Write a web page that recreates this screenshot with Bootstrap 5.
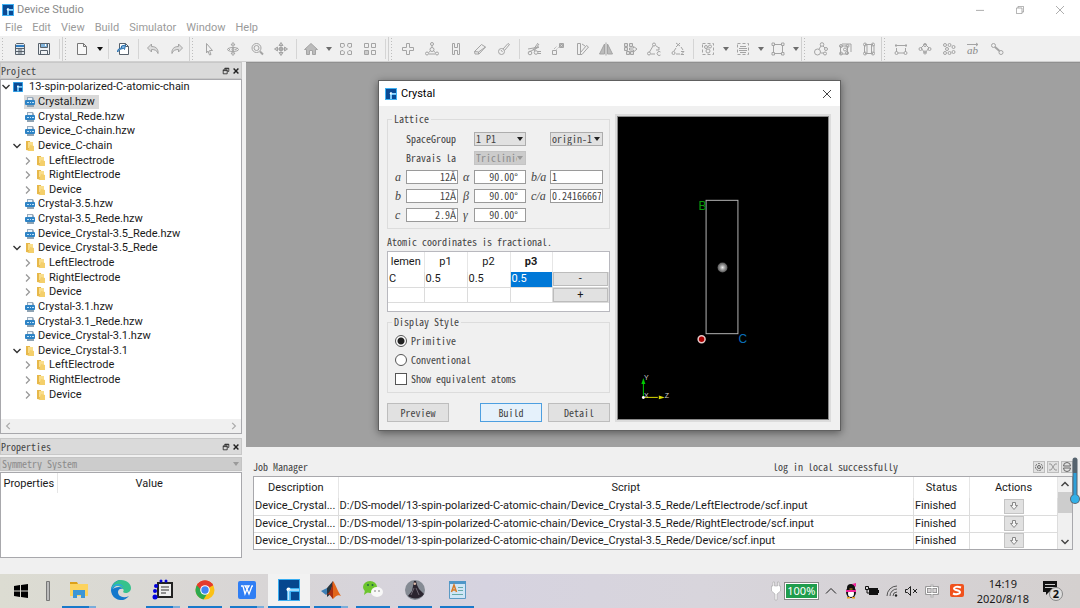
<!DOCTYPE html>
<html lang="en">
<head>
<meta charset="utf-8">
<meta name="viewport" content="width=device-width, initial-scale=1">
<title>Device Studio</title>
<link href="https://cdn.jsdelivr.net/npm/bootstrap@5.3.0/dist/css/bootstrap.min.css" rel="stylesheet">
<style>
  :root { --face:#f0f0f0; --line:#a8a8ac; --hair:#dcdcdc; --ui:Roboto,"Open Sans",sans-serif; --mono:"Noto Sans CJK SC","Liberation Mono",monospace; }
  body { font-family:var(--ui); font-size:11px; line-height:15px; color:#1a1a1a; background:var(--face); min-height:100vh; overflow:hidden; }
  button, input, select { font:inherit; font-feature-settings:inherit; color:inherit; border-radius:0; }
  button { padding:0; border:0; background:none; }
  svg { display:block; flex:none; }
  .mono { font-family:var(--mono); font-feature-settings:"hwid"; font-size:10px; line-height:12px; color:#444; }
  .s16 { width:16px; height:16px; }
  .s12 { width:12px; height:12px; }
  .s10 { width:10px; height:10px; }
  .s8 { width:8px; height:8px; }

  /* title bar, menu, toolbars */
  .titlebar { height:19px; background:#fff; color:#8a8a8a; padding-left:2px; }
  .titlebar span { padding-left:3px; }
  .winbtn { width:40px; height:19px; }
  .menubar { height:17px; background:#fff; color:#9a9a9a; gap:10px; padding-left:5px; }
  .menubar a { color:inherit; text-decoration:none; }
  .toolstrip { height:26px; background:var(--face); border-bottom:1px solid #d0d0d0; overflow:hidden; }
  .tool { width:24px; height:24px; flex:none; }
  .tool svg { margin:auto; fill:none; stroke:#a4a4a4; stroke-width:1; }
  .tool.on svg { stroke:#57616b; }
  .drop { width:11px; height:24px; flex:none; }
  .drop::after, .pick::after { content:""; width:0; border:3px solid transparent; border-top:4px solid #6d6d6d; border-bottom:0; display:block; margin:auto; }
  .drop.on::after { border-top-color:#111; }
  .split { width:6px; height:20px; flex:none; background:linear-gradient(#d5d5d5,#d5d5d5) 3px 0/1px 100% no-repeat; }
  .grip { width:8px; height:24px; flex:none; border-left:1px solid #d0d0d0; background:radial-gradient(circle,#bdbdbd 1px,transparent 1px) 1px 0/3px 3px repeat-y; }

  /* docks */
  .dock { width:242px; }
  .docktitle { height:17px; background:#dadada; border:1px solid #c8c8c8; padding:0 1px 0 0; gap:2px; }
  .sunken { background:#fff; border:1px solid var(--line); }
  .tree { height:95%; display:grid; grid-auto-rows:1fr; margin:0; padding:0; list-style:none; }
  .tree li { display:flex; align-items:center; min-height:0; white-space:nowrap; line-height:14px; }
  .tree .lv1 { padding-left:23px; }
  .tree .lv1.dir { padding-left:11px; }
  .tree .lv2 { padding-left:22px; }
  .tree svg { margin-right:2px; }
  .tree .chosen { background:#d9d9d9; }
  .hscroll { height:14px; background:var(--face); }
  .propbox { height:86px; }
  .propbox th { height:20px; }
  .propset { margin:2px 0 1px; }

  /* work area */
  .mdi { background:#a0a0a0; border-top:1px solid #909090; }
  .dlg { position:absolute; left:132px; top:17px; width:463px; border:1px solid #606060; background:var(--face); box-shadow:0 2px 8px rgba(0,0,0,.45); }
  .dlgtitle { height:25px; background:#fff; padding:0 8px 0 6px; }
  .dlgbody { display:flex; gap:7px; padding:7px 11px 8px 8px; }
  .dlgside { width:223px; }
  .group { border:1px solid var(--hair); min-width:0; }
  .group > legend { float:none; width:auto; margin:0 0 0 4px; padding:0 2px; font-size:inherit; line-height:12px; height:12px; }
  .lattice { display:grid; grid-template-columns:11px 52px 16px 52px 24px 53px; grid-auto-rows:19px; align-items:center; padding:4px 6px 4px 7px; }
  .lattice input { width:100%; height:14px; border:1px solid #9a9a9a; background:#fff; padding:0 1px; line-height:12px; }
  .lattice .num { text-align:right; }
  .lattice .deg { text-align:right; padding-right:7px; }
  .mathlab { font-family:"Liberation Serif",serif; font-style:italic; font-size:12px; line-height:14px; padding-left:5px; font-feature-settings:normal; }
  .mathlab.first { padding-left:0; }
  .pick { position:relative; height:14px; background:#e1e1e1; border:1px solid #adadad; display:flex; align-items:center; overflow:hidden; }
  .pick select { appearance:none; border:0; background:none; padding:0 0 0 1px; width:100%; height:12px; opacity:1; }
  .lattice .pick select { width:42px; flex:none; }
  .pick::after { position:absolute; right:2px; border-top-color:#222; }
  .pick.off { background:#ccc; border-color:#c4c4c4; }
  .pick.off select { color:#8b8b8b; }
  .pick.off::after { border-top-color:#9a9a9a; }
  .note { padding:7px 0 3px; }
  .grid { border-collapse:collapse; table-layout:fixed; width:100%; }
  .grid th { font-weight:400; text-align:center; padding:0; border-right:1px solid #e6e6e6; white-space:nowrap; overflow:hidden; }
  .grid td { padding:0 1px; border-right:1px solid #dcdcdc; border-bottom:1px solid #dcdcdc; white-space:nowrap; overflow:hidden; line-height:14px; }
  .atoms { height:61px; border:1px solid #b8b8be; background:#fff; font:11px/14px var(--ui); font-feature-settings:normal; color:#1a1a1a; }
  .atoms th { height:20px; }
  .atoms td { height:15px; }
  .atoms td.cmd { padding:0; }
  .atoms td.cmd button { display:block; width:100%; height:14px; background:#e1e1e1; border:1px solid #bcbcbc; line-height:12px; }
  .atoms td.cur { background:#0078d7; color:#fff; }
  .opt { height:19px; display:flex; align-items:center; gap:4px; }
  .opt input { appearance:none; width:12px; height:12px; margin:0; border:1px solid #555; background:#fff; }
  .opt input[type=radio] { border-radius:50%; }
  .opt input[type=radio]:checked { background:radial-gradient(circle,#222 3px,#fff 4px); }
  .opts { padding:3px 7px 4px; }
  .cmds { display:flex; gap:6px; padding-top:10px; }
  .push { width:62px; height:19px; background:#e1e1e1; border:1px solid #bdbdbd; }
  .push.main { background:#e5f1fb; border-color:#4d9fe0; }
  .view { height:304px; margin-top:3px; background:#000; border:1px solid #8a8a8a; outline:2px solid #dcdcdc; }

  /* job manager */
  .jobpane { padding:0 7px 8px; }
  .jobhead { height:29px; padding-bottom:3px; }
  .jobnote { padding-left:110px; }
  .jobs { height:74px; overflow:hidden; }
  .jobs th { height:21px; }
  .jobs td { height:17px; line-height:16px; }
  .jobs .get { width:20px; height:15px; background:#e1e1e1; border:1px solid #c4c4c4; margin:auto; display:flex; }
  .jobs .get svg { margin:auto; }
  .vscroll { width:14px; background:var(--face); flex:none; }
  .thumb { height:21px; background:#cdcdcd; }
  .minis { gap:2px; }
  .mini { width:12px; height:12px; background:#e1e1e1; border:1px solid #bdbdbd; display:flex; }
  .mini svg { margin:auto; }
  .gauge { position:absolute; right:0; top:2px; }

  /* taskbar */
  .taskbar { height:34px; background:linear-gradient(90deg,#dcdcd2,#d8d5d6 25%,#d6d3e0 45%,#d8d5dc 65%,#d4d0cf); }
  .app { width:42px; height:34px; flex:none; padding:0 4px; display:flex; flex-direction:column; }
  .app svg { margin:auto; width:22px; height:22px; }
  .app i { height:2px; width:100%; background:#1979ca; flex:none; }
  .app.many i { background:linear-gradient(90deg,#1979ca 80%,#79addb 80%); }
  .app.front { background:#f2f2f2; padding:0; }
  .tray { gap:7px; font-family:"Noto Sans",sans-serif; }
  .clock { padding:0 6px; }
  .power { background:#1f9d4d; color:#fff; border:1px solid #fff; outline:1px solid #888; height:16px; width:33px; line-height:14px; text-align:center; }
</style>
</head>
<body class="d-flex flex-column">

<svg width="0" height="0" class="position-absolute" aria-hidden="true">
  <symbol id="logo" viewBox="0 0 12 12"><path fill="#3fb2f4" d="M0 0h12v12H0z"/><path fill="#0a4a94" d="M1 1h10v4H8L6 4.500H5V11H1zM7 7h4v4H7z"/><circle cx="6" cy="5.500" r="1.200" fill="#fff"/><path stroke="#bfe6ff" d="M6 6v5M6 5.800h5"/></symbol>
  <symbol id="biglogo" viewBox="0 0 22 22"><path fill="#39aef2" d="M0 0h22v22H0z"/><path fill="#06468f" d="M1 1h20v8h-8a3 3 0 00-4 3v9H1zM13 13h8v8h-8z"/><circle cx="10.500" cy="10.500" r="2" fill="#fff"/><path stroke="#bfe6ff" stroke-width="1.500" d="M10.500 11v10M11 11h10"/></symbol>
  <symbol id="file" viewBox="0 0 12 12"><path fill="#9ab" d="M3 1h6l1 2v2H3z"/><path fill="#e8f1f8" d="M4 2h4v2H4z"/><rect x="1" y="4" width="10" height="5" rx="1" fill="#2d83c5"/><path stroke="#bfe0f7" d="M3 6.500h2M6 6.500h1M8 6.500h2"/><path fill="#8fa3b3" d="M3 9h7v2H3z"/></symbol>
  <symbol id="folder" viewBox="0 0 12 12"><path fill="#e7b84a" d="M2 1h4l1 10-5-1z"/><path fill="#f9dd8a" d="M4 2h5v6H4z"/><path fill="#f4cf6b" d="M6 5l4 1v5H4z"/></symbol>
  <symbol id="open" viewBox="0 0 10 10"><path d="M1.500 3L5 6.500 8.500 3" fill="none" stroke="#333" stroke-width="1.400"/></symbol>
  <symbol id="shut" viewBox="0 0 10 10"><path d="M3 1.500L6.500 5 3 8.500" fill="none" stroke="#999" stroke-width="1.300"/></symbol>
  <symbol id="float" viewBox="0 0 10 10"><path d="M3.500 3V1.500h5v4H7M1.500 3.500h5v5h-5zM1.500 4.500h5M3.500 2h5" fill="none" stroke="#222"/></symbol>
  <symbol id="close" viewBox="0 0 10 10"><path d="M2 2l6 6M8 2L2 8" fill="none" stroke="#222" stroke-width="1.800"/></symbol>
  <symbol id="down" viewBox="0 0 10 10"><path d="M3.500 1.500h3v3h2L5 8.500 1.500 4.500h2z" fill="#f5f5f5" stroke="#888"/></symbol>
</svg>

<header>
  <div class="titlebar d-flex align-items-center">
    <svg class="s12"><use href="#logo"/></svg>
    <span class="me-auto">Device Studio</span>
    <button class="winbtn" aria-label="Minimize"><svg class="s8 mx-auto" viewBox="0 0 10 10"><path d="M0 5.500h10" stroke="#999"/></svg></button>
    <button class="winbtn" aria-label="Restore"><svg class="s8 mx-auto" viewBox="0 0 10 10"><path d="M2.500 2.500v-2h7v7h-2M.5 2.500h7v7h-7z" fill="none" stroke="#999"/></svg></button>
    <button class="winbtn" aria-label="Close"><svg class="s8 mx-auto" viewBox="0 0 10 10"><path d="M0 0l10 10M10 0L0 10" stroke="#999"/></svg></button>
  </div>
  <nav class="menubar d-flex align-items-center">
    <a href="#">File</a><a href="#">Edit</a><a href="#">View</a><a href="#">Build</a><a href="#">Simulator</a><a href="#">Window</a><a href="#">Help</a>
  </nav>
  <div class="toolstrip d-flex align-items-center">
    <span class="grip border-0"></span>
    <button class="tool on" aria-label="Open"><svg class="s16" viewBox="0 0 16 16"><path fill="#dfe6ec" d="M3.500 3.500l1-1h7l1 1v10h-9z"/><path stroke="#2f7ec4" stroke-width="2" d="M4 5h8"/><path d="M3 7.500h10M3 10.500h10M6 9h4M6 12h4"/></svg></button>
    <button class="tool on" aria-label="Save"><svg class="s16" viewBox="0 0 16 16"><path fill="#eef1f4" d="M2.500 2.500h11v11h-11zM4.500 9.500h7v4h-7z"/><path fill="#7fb2da" d="M4.500 2.500h7v4h-7z"/><path stroke="#fff" d="M9.500 3v2"/></svg></button>
    <span class="split"></span><span class="grip"></span>
    <button class="tool on" aria-label="New"><svg class="s16" viewBox="0 0 16 16"><path fill="#f8f8f8" stroke="#777" d="M3.500 2.500h6l3 3v8h-9zM9.500 2.500v3h3"/></svg></button>
    <button class="drop on" aria-label="New menu"></button>
    <span class="split"></span>
    <button class="tool on" aria-label="Import"><svg class="s16" viewBox="0 0 16 16"><path fill="#fff" d="M4.500 2.500h6l3 3v8h-9zM10.500 2.500v3h3"/><path fill="#7db3e0" stroke="#2a70ad" d="M2.500 11c0-3 2-4 4-4V5l4-1-1 4.500-1-1c-2 0-4 1-6 3.500z"/></svg></button>
    <span class="split"></span>
    <button class="tool" aria-label="Undo"><svg class="s16" viewBox="0 0 16 16"><path fill="#ddd" d="M2.500 7l4-4v2.500c5 0 7 3 6.500 7-1-3-3-4-6.500-4V11z"/></svg></button>
    <button class="tool" aria-label="Redo"><svg class="s16" viewBox="0 0 16 16"><path fill="#ddd" d="M13.500 7l-4-4v2.500c-5 0-7 3-6.500 7 1-3 3-4 6.500-4V11z"/></svg></button>
    <span class="grip"></span>
    <button class="tool" aria-label="Select"><svg class="s16" viewBox="0 0 16 16"><path d="M5.500 2.500l6 7H8.500l1.500 4-1.500.5-1.500-4-1.500 2z"/></svg></button>
    <button class="tool" aria-label="Rotate"><svg class="s16" viewBox="0 0 16 16"><ellipse cx="8" cy="8.500" rx="5.500" ry="2"/><path d="M8 1.500L6 4h4zM8 14.500L6 12h4zM8 4v8M3 7l2 2M13 7l-3 2"/><circle cx="8" cy="8.500" r="1"/></svg></button>
    <button class="tool" aria-label="Zoom"><svg class="s16" viewBox="0 0 16 16"><circle cx="7.500" cy="7" r="4.500"/><circle cx="7.500" cy="7" r="2.500"/><path stroke-width="2" d="M11 10.500l3 3"/></svg></button>
    <button class="tool" aria-label="Move"><svg class="s16" viewBox="0 0 16 16"><path fill="#ccc" d="M8 1.500l2 3H6zM8 14.500l2-3H6zM1.500 8l3-2v4zM14.500 8l-3-2v4zM6.500 6.500h3v3h-3zM8 4v8M4 8h8"/></svg></button>
    <span class="split"></span>
    <button class="tool" aria-label="Home view"><svg class="s16" viewBox="0 0 16 16"><path fill="#bbb" d="M1.500 8.500L8 2.500l6.500 6h-2v5h-3v-4h-3v4h-3v-5z"/></svg></button>
    <button class="drop" aria-label="View menu"></button>
    <button class="tool" aria-label="Fit"><svg class="s16" viewBox="0 0 16 16"><path d="M2.500 6V2.500H6L6.500 5 5 6.500zM10 2.500h3.500V6L11 6.500 9.500 5zM2.500 10v3.500H6L6.500 11 5 9.500zM10 13.500h3.500V10L11 9.500 9.500 11z"/></svg></button>
    <button class="tool" aria-label="Tile"><svg class="s16" viewBox="0 0 16 16"><path d="M2.500 2.500h4v4h-4zM9.500 2.500h4v4h-4zM9.500 9.500h4v4h-4z"/><path fill="#ccc" d="M2.500 9.500h4v4h-4z"/></svg></button>
    <span class="split"></span><span class="grip"></span>
    <button class="tool" aria-label="Add atom"><svg class="s16" viewBox="0 0 16 16"><path d="M6.500 2.500h3v4h4v3h-4v4h-3v-4h-4v-3h4z"/></svg></button>
    <button class="tool" aria-label="Add fragment"><svg class="s16" viewBox="0 0 16 16"><circle cx="8" cy="3" r="1.500"/><circle cx="8" cy="8.500" r="2"/><circle cx="3" cy="12.500" r="1.500"/><circle cx="13" cy="12.500" r="1.500"/><path d="M8 4.500v2M6.500 10l-2 1.500M9.500 10l2 1.500M5 13h6"/></svg></button>
    <button class="tool" aria-label="Hydrogen"><svg class="s16" viewBox="0 0 16 16"><path d="M4.500 2.500h2v4h3v-4h2v11h-2v-4h-3v4h-2z"/></svg></button>
    <button class="tool" aria-label="Erase"><svg class="s16" viewBox="0 0 16 16"><path fill="#eee" d="M2.500 10.500l7-7 4 2.500-6.500 7H3z"/><path d="M2.500 10.500l4 .5 7-5M6.500 11v2"/></svg></button>
    <button class="tool" aria-label="Bond"><svg class="s16" viewBox="0 0 16 16"><circle cx="5.500" cy="10.500" r="3"/><path d="M7 8l5-5.500 1.500 1L8.500 9.500M5 9l1.500 2"/></svg></button>
    <span class="split"></span>
    <button class="tool" aria-label="Cleave"><svg class="s16" viewBox="0 0 16 16"><path d="M2 8l11-2M3 11l10-5M12 2L7 9M13 3L8 10"/><circle cx="4" cy="12" r="1.800"/><circle cx="10" cy="11.500" r="1.800"/><path d="M12 10.500h3M12 12.500h3"/></svg></button>
    <button class="tool" aria-label="Scale"><svg class="s16" viewBox="0 0 16 16"><path d="M9.500 2.500h4v4h-4zM2.500 9.500h4v4h-4z"/><path fill="#ddd" d="M10.500 3.500h2v2h-2z"/><path d="M6.500 8.500l2-2M4 8l3-3" stroke-dasharray="1 1"/></svg></button>
    <button class="tool" aria-label="Angle"><svg class="s16" viewBox="0 0 16 16"><path d="M3.500 2.500h3v11h-3zM6.500 11.500l6-7 2 1.500-6.500 7.500h-2M8 3l3 2"/></svg></button>
    <button class="tool" aria-label="Mirror"><svg class="s16" viewBox="0 0 16 16"><path fill="#bbb" d="M6.500 3v10h-5zM9.500 3v10h5z"/><path d="M8 1.500v13"/></svg></button>
    <button class="tool" aria-label="Replicate"><svg class="s16" viewBox="0 0 16 16"><path fill="#ddd" d="M2.500 2.500h3v3h-3zM7.500 2.500h3v3h-3zM2.500 6.500h3v3h-3zM4.500 10.500h3v3h-3zM8.500 10.500h3v3h-3z"/><path fill="#eee" d="M7.500 7h4V5.500L15 8l-3.500 3V9h-4z"/></svg></button>
    <button class="tool" aria-label="Ring A"><svg class="s16" viewBox="0 0 16 16"><path d="M7 5l-3.500 6M9.500 4.500L13 7M5 13h4"/><circle cx="8" cy="3.500" r="1.500"/><circle cx="3" cy="12.500" r="1.500"/><path d="M14.500 11a2 2 0 100 3M13 6v3h-3"/></svg></button>
    <button class="tool" aria-label="Ring Z"><svg class="s16" viewBox="0 0 16 16"><path d="M6 2l4 3M10 2L6 6M6 7l-2 3M11 6l2 3M6 13h4"/><circle cx="3.500" cy="12" r="1.500"/><path d="M11 10.500h3l-3 3h3"/></svg></button>
    <span class="split"></span>
    <button class="tool" aria-label="Select atoms"><svg class="s16" viewBox="0 0 16 16"><path d="M2.500 2.500h11v11h-11z" stroke-dasharray="3 2"/><circle cx="6" cy="6" r="1.500"/><circle cx="10" cy="5.500" r="1.500"/><circle cx="8" cy="10" r="2"/></svg></button>
    <button class="drop" aria-label="Select atoms menu"></button>
    <button class="tool" aria-label="Select layers"><svg class="s16" viewBox="0 0 16 16"><path d="M2.500 2.500h11v11h-11z" stroke-dasharray="3 2"/><path d="M5 5.500h6M4 7.500h8M4 9.500h8M5 11.500h6"/></svg></button>
    <button class="drop" aria-label="Select layers menu"></button>
    <button class="tool" aria-label="Cell"><svg class="s16" viewBox="0 0 16 16"><path d="M3.500 3.500h9v9h-9z"/><path fill="#eee" d="M2 2h2.500v2.500H2zM11.500 2H14v2.500h-2.500zM2 11.500h2.500V14H2zM11.500 11.500H14V14h-2.500z"/></svg></button>
    <button class="drop" aria-label="Cell menu"></button>
    <span class="grip"></span>
    <button class="tool" aria-label="Molecule"><svg class="s16" viewBox="0 0 16 16"><circle cx="4.500" cy="11" r="3"/><circle cx="9" cy="3.500" r="1.800"/><circle cx="13" cy="8" r="1.500"/><circle cx="12" cy="12.500" r="1.500"/><path d="M8 5l-2 3M10 5l2 2M8 12h3"/></svg></button>
    <button class="tool" aria-label="Crystal"><svg class="s16" viewBox="0 0 16 16"><path d="M3.500 5h7v8h-7zM5 3h9v8"/><circle cx="4" cy="5" r="1.500"/><circle cx="10.500" cy="5" r="1.500"/><circle cx="4" cy="12.500" r="1.500"/><circle cx="10" cy="12" r="1.500"/><circle cx="8" cy="8.500" r="1.500"/></svg></button>
    <button class="tool" aria-label="Device"><svg class="s16" viewBox="0 0 16 16"><path d="M3.500 4v8M6 4v8M10.500 4v8M13 4v8M4 3.500h8M4 12.500h8"/><circle cx="4" cy="3.500" r="1.500"/><circle cx="12" cy="3.500" r="1.500"/><circle cx="4" cy="12.500" r="1.500"/><circle cx="12" cy="12.500" r="1.500"/></svg></button>
    <span class="grip"></span>
    <button class="tool" aria-label="Distance"><svg class="s16" viewBox="0 0 16 16"><path d="M2 4.500h12M3 3v3M13 3v3M3.500 7v4M12.500 7v4M5 12h6"/><circle cx="3.500" cy="12" r="1.500"/><circle cx="12.500" cy="12" r="1.500"/></svg></button>
    <button class="tool" aria-label="Angle measure"><svg class="s16" viewBox="0 0 16 16"><path d="M4 7l4-4 4 4-4 5z"/><circle cx="8" cy="4" r="1.500"/><circle cx="3.500" cy="8" r="1.500"/><circle cx="12.500" cy="8" r="1.500"/><circle cx="8" cy="11.500" r="1.500"/></svg></button>
    <button class="tool" aria-label="Cluster"><svg class="s16" viewBox="0 0 16 16"><circle cx="4" cy="4" r="1.500"/><circle cx="8.500" cy="4" r="1.500"/><circle cx="12.500" cy="6" r="1.500"/><circle cx="6" cy="8" r="1.500"/><circle cx="4" cy="12" r="1.500"/><circle cx="8.500" cy="12" r="1.500"/><circle cx="12.500" cy="11" r="1.500"/></svg></button>
    <button class="tool" aria-label="Vector"><svg class="s16" viewBox="0 0 16 16"><path d="M2 3.500h11M11 2l2 1.500L11 5"/><text x="2" y="13" font-family="Liberation Serif" font-style="italic" font-size="11" fill="#888" stroke="none">ab</text></svg></button>
    <button class="tool" aria-label="Bond info"><svg class="s16" viewBox="0 0 16 16"><circle cx="4.500" cy="4.500" r="2"/><circle cx="12" cy="11.500" r="2"/><path stroke-width="2" d="M6 6l4.500 4"/></svg></button>
  </div>
</header>

<main class="d-flex flex-grow-1 pb-3">
  <aside class="dock d-flex flex-column flex-shrink-0">
    <div class="docktitle mono d-flex align-items-center"><span class="me-auto">Project</span><button aria-label="Float"><svg class="s8"><use href="#float"/></svg></button><button aria-label="Close"><svg class="s8"><use href="#close"/></svg></button></div>
    <div class="sunken flex-grow-1 d-flex flex-column">
      <div class="flex-grow-1">
      <ul class="tree">
        <li><svg class="s10"><use href="#open"/></svg><svg class="s10"><use href="#logo"/></svg><span class="ps-1">13-spin-polarized-C-atomic-chain</span></li>
        <li class="lv1"><span class="chosen d-flex align-items-center pe-1"><svg class="s12"><use href="#file"/></svg>Crystal.hzw</span></li>
        <li class="lv1"><svg class="s12"><use href="#file"/></svg>Crystal_Rede.hzw</li>
        <li class="lv1"><svg class="s12"><use href="#file"/></svg>Device_C-chain.hzw</li>
        <li class="lv1 dir"><svg class="s10"><use href="#open"/></svg><svg class="s12"><use href="#folder"/></svg>Device_C-chain</li>
        <li class="lv2"><svg class="s10"><use href="#shut"/></svg><svg class="s12"><use href="#folder"/></svg>LeftElectrode</li>
        <li class="lv2"><svg class="s10"><use href="#shut"/></svg><svg class="s12"><use href="#folder"/></svg>RightElectrode</li>
        <li class="lv2"><svg class="s10"><use href="#shut"/></svg><svg class="s12"><use href="#folder"/></svg>Device</li>
        <li class="lv1"><svg class="s12"><use href="#file"/></svg>Crystal-3.5.hzw</li>
        <li class="lv1"><svg class="s12"><use href="#file"/></svg>Crystal-3.5_Rede.hzw</li>
        <li class="lv1"><svg class="s12"><use href="#file"/></svg>Device_Crystal-3.5_Rede.hzw</li>
        <li class="lv1 dir"><svg class="s10"><use href="#open"/></svg><svg class="s12"><use href="#folder"/></svg>Device_Crystal-3.5_Rede</li>
        <li class="lv2"><svg class="s10"><use href="#shut"/></svg><svg class="s12"><use href="#folder"/></svg>LeftElectrode</li>
        <li class="lv2"><svg class="s10"><use href="#shut"/></svg><svg class="s12"><use href="#folder"/></svg>RightElectrode</li>
        <li class="lv2"><svg class="s10"><use href="#shut"/></svg><svg class="s12"><use href="#folder"/></svg>Device</li>
        <li class="lv1"><svg class="s12"><use href="#file"/></svg>Crystal-3.1.hzw</li>
        <li class="lv1"><svg class="s12"><use href="#file"/></svg>Crystal-3.1_Rede.hzw</li>
        <li class="lv1"><svg class="s12"><use href="#file"/></svg>Device_Crystal-3.1.hzw</li>
        <li class="lv1 dir"><svg class="s10"><use href="#open"/></svg><svg class="s12"><use href="#folder"/></svg>Device_Crystal-3.1</li>
        <li class="lv2"><svg class="s10"><use href="#shut"/></svg><svg class="s12"><use href="#folder"/></svg>LeftElectrode</li>
        <li class="lv2"><svg class="s10"><use href="#shut"/></svg><svg class="s12"><use href="#folder"/></svg>RightElectrode</li>
        <li class="lv2"><svg class="s10"><use href="#shut"/></svg><svg class="s12"><use href="#folder"/></svg>Device</li>
      </ul>
      </div>
      <div class="hscroll d-flex justify-content-between align-items-center px-1">
        <svg class="s8" viewBox="0 0 10 10"><path d="M6 1L2 5l4 4" fill="none" stroke="#aaa" stroke-width="1.500"/></svg>
        <svg class="s8" viewBox="0 0 10 10"><path d="M4 1l4 4-4 4" fill="none" stroke="#aaa" stroke-width="1.500"/></svg>
      </div>
    </div>
    <div class="docktitle mono d-flex align-items-center mt-1"><span class="me-auto">Properties</span><button aria-label="Float"><svg class="s8"><use href="#float"/></svg></button><button aria-label="Close"><svg class="s8"><use href="#close"/></svg></button></div>
    <div class="pick off mono propset"><select aria-label="Property set" disabled><option>Symmetry System</option></select></div>
    <div class="sunken propbox">
      <table class="grid"><colgroup><col style="width:56px"><col></colgroup><tr><th>Properties</th><th class="border-0">Value</th></tr></table>
    </div>
  </aside>

  <div class="d-flex flex-column flex-grow-1 ms-1">
    <section class="mdi flex-grow-1 position-relative">
      <div class="dlg" role="dialog" aria-label="Crystal">
        <div class="dlgtitle d-flex align-items-center">
          <svg class="s12"><use href="#logo"/></svg><span class="ps-1 me-auto text-black">Crystal</span>
          <button aria-label="Close"><svg class="s10" viewBox="0 0 10 10"><path d="M1 1l8 8M9 1L1 9" stroke="#444"/></svg></button>
        </div>
        <div class="dlgbody mono">
          <form class="dlgside flex-shrink-0">
            <fieldset class="group">
              <legend>Lattice</legend>
              <div class="lattice">
                <span></span><label for="sg">SpaceGroup</label><span></span><div class="pick"><select id="sg"><option>1 P1</option></select></div><span></span><div class="pick"><select aria-label="Origin"><option>origin-1</option></select></div>
                <span></span><label for="bl">Bravais la</label><span></span><div class="pick off"><select id="bl" disabled><option>Triclinic</option></select></div><span></span><span></span>
                <label class="mathlab first" for="la">a</label><input class="num" id="la" value="12Å"><label class="mathlab" for="al">α</label><input class="deg" id="al" value="90.00°"><label class="mathlab" for="ba">b/a</label><input id="ba" value="1">
                <label class="mathlab first" for="lb">b</label><input class="num" id="lb" value="12Å"><label class="mathlab" for="be">β</label><input class="deg" id="be" value="90.00°"><label class="mathlab" for="ca">c/a</label><input id="ca" value="0.24166667">
                <label class="mathlab first" for="lc">c</label><input class="num" id="lc" value="2.9Å"><label class="mathlab" for="ga">γ</label><input class="deg" id="ga" value="90.00°">
              </div>
            </fieldset>
            <div class="note">Atomic coordinates is fractional.</div>
            <div class="atoms">
              <table class="grid">
                <colgroup><col style="width:36px"><col style="width:43px"><col style="width:43px"><col style="width:42px"><col></colgroup>
                <tr><th>lemen</th><th>p1</th><th>p2</th><th class="fw-bold">p3</th><th class="border-0"></th></tr>
                <tr><td>C</td><td>0.5</td><td>0.5</td><td class="cur">0.5</td><td class="cmd"><button type="button">-</button></td></tr>
                <tr><td></td><td></td><td></td><td></td><td class="cmd"><button type="button">+</button></td></tr>
              </table>
            </div>
            <fieldset class="group mt-1">
              <legend>Display Style</legend>
              <div class="opts">
                <label class="opt"><input type="radio" name="ds" checked>Primitive</label>
                <label class="opt"><input type="radio" name="ds">Conventional</label>
                <label class="opt"><input type="checkbox">Show equivalent atoms</label>
              </div>
            </fieldset>
            <div class="cmds">
              <button type="button" class="push me-auto">Preview</button><button type="button" class="push main">Build</button><button type="button" class="push">Detail</button>
            </div>
          </form>
          <div class="view flex-grow-1">
            <svg width="100%" height="100%" viewBox="0 0 211 303" font-family="Liberation Sans" font-size="12">
              <defs><radialGradient id="ball"><stop offset="0" stop-color="#eee"/><stop offset=".5" stop-color="#999"/><stop offset="1" stop-color="#555"/></radialGradient></defs>
              <rect x="88.500" y="83.500" width="32" height="134" fill="none" stroke="#b4b4b4"/>
              <circle cx="105" cy="151" r="5" fill="url(#ball)"/>
              <text x="81" y="93" fill="#0a9b0a">B</text>
              <text x="121" y="227" fill="#0a6fb8">C</text>
              <circle cx="84" cy="223" r="3.500" fill="#a00" stroke="#e8c8c8" stroke-width="1.500"/>
              <path d="M25.500 280v-13" stroke="#0c0"/><path fill="#0c0" d="M25.500 262l2 6h-4z"/>
              <path d="M26 281.500h14" stroke="#dd0"/><path fill="#dd0" d="M47 281.500l-6-2v4z"/>
              <circle cx="25.500" cy="281.500" r="1.500" fill="#fff"/>
              <g font-size="7" fill="#ccc"><text x="26" y="264">Y</text><text x="26" y="282">X</text><text x="47" y="282">Z</text></g>
            </svg>
          </div>
        </div>
      </div>
    </section>

    <section class="position-relative jobpane">
      <div class="row g-0 align-items-end jobhead mono">
        <div class="col">Job Manager</div>
        <div class="col">
          <div class="d-flex justify-content-between align-items-end jobnote">
            <span>log in local successfully</span>
            <span class="d-flex minis">
              <button class="mini" aria-label="Settings"><svg class="s10" viewBox="0 0 10 10"><g fill="none" stroke="#666"><circle cx="5" cy="5" r="3.500" stroke-dasharray="2 1"/><circle cx="5" cy="5" r="1.500"/></g></svg></button>
              <button class="mini" aria-label="Shuffle"><svg class="s10" viewBox="0 0 10 10"><path d="M1 2h2l4 6h2M1 8h2l4-6h2" fill="none" stroke="#999"/></svg></button>
              <button class="mini" aria-label="Refresh"><svg class="s10" viewBox="0 0 10 10"><path d="M1.500 4a3.500 3.500 0 017 0zM1.500 6a3.500 3.500 0 007 0z" fill="none" stroke="#666"/></svg></button>
            </span>
          </div>
        </div>
      </div>
      <div class="sunken jobs d-flex">
        <table class="grid flex-grow-1">
          <colgroup><col style="width:84px"><col><col style="width:56px"><col style="width:88px"></colgroup>
          <tr><th>Description</th><th>Script</th><th>Status</th><th>Actions</th></tr>
          <tr><td>Device_Crystal...</td><td>D:/DS-model/13-spin-polarized-C-atomic-chain/Device_Crystal-3.5_Rede/LeftElectrode/scf.input</td><td>Finished</td><td><button class="get" aria-label="Download"><svg class="s10"><use href="#down"/></svg></button></td></tr>
          <tr><td>Device_Crystal...</td><td>D:/DS-model/13-spin-polarized-C-atomic-chain/Device_Crystal-3.5_Rede/RightElectrode/scf.input</td><td>Finished</td><td><button class="get" aria-label="Download"><svg class="s10"><use href="#down"/></svg></button></td></tr>
          <tr><td>Device_Crystal...</td><td>D:/DS-model/13-spin-polarized-C-atomic-chain/Device_Crystal-3.5_Rede/Device/scf.input</td><td>Finished</td><td><button class="get" aria-label="Download"><svg class="s10"><use href="#down"/></svg></button></td></tr>
        </table>
        <div class="vscroll d-flex flex-column">
          <svg class="mx-auto" width="10" height="15" viewBox="0 0 10 15"><path d="M1.500 9L5 5.500 8.500 9" fill="none" stroke="#444" stroke-width="1.500"/></svg>
          <div class="thumb mb-auto"></div>
          <svg class="mx-auto" width="10" height="15" viewBox="0 0 10 15"><path d="M1.500 6L5 9.500 8.500 6" fill="none" stroke="#444" stroke-width="1.500"/></svg>
        </div>
      </div>
      <svg class="gauge" width="11" height="56" viewBox="0 0 11 56"><path d="M6 11v34" stroke="#56636e" stroke-width="5" stroke-linecap="round"/><circle cx="6" cy="50" r="5" fill="#56636e"/><path d="M6 24v26" stroke="#2e9fd8" stroke-width="3"/><circle cx="6" cy="50" r="4" fill="#33b1e8"/></svg>
    </section>
  </div>
</main>

<footer class="taskbar d-flex align-items-stretch">
  <button class="app" aria-label="Start"><svg viewBox="0 0 22 22"><path fill="#000" d="M4 6l6-1v5.500H4zM11 5l7-1v6.500h-7zM4 11.500h6V17l-6-1zM11 11.500h7V18l-7-1z"/></svg></button>
  <span class="px-1 d-flex align-items-center me-1"><svg width="4" height="20"><path fill="#bbb" stroke="#777" d="M.5.5h3v19h-3z"/></svg></span>
  <button class="app many" aria-label="Explorer"><svg viewBox="0 0 22 22"><path fill="#dca019" d="M2 3h7l1 2H2z"/><path fill="#fcd35e" d="M2 5h18v12H2z"/><path fill="#3c96d6" d="M5 19v-8h12v8h-4v-3H9v3z"/></svg><i></i></button>
  <button class="app" aria-label="Edge"><svg viewBox="0 0 22 22"><path fill="#1478cc" d="M11 1a10 10 0 108 16c-6 3-11 0-11-4 0-3 3-4 5-3 0-3-9-3-12 2z"/><path fill="#36c28c" d="M1.500 9C3 4 7 1 11 1c6 0 10 4 10 8 0 5-6 6-8 4 1-1 1-3-1-4-3-3-9-2-10.500 0z"/><path fill="#2ba8dc" d="M1.500 9C5 3 12 4 14 9c-4-4-10-3-12.500 2z"/></svg><i class="bg-transparent"></i></button>
  <button class="app many" aria-label="Terminal"><svg viewBox="0 0 22 22"><path fill="#eee" stroke="#222" stroke-width="2" d="M6 4h14v14H6z"/><path stroke="#333" d="M9 8h8M9 11h8M9 14h5"/><g fill="#00d"><circle cx="4" cy="7" r="2"/><circle cx="3" cy="12" r="2"/><circle cx="3" cy="18" r="2.500"/><circle cx="9" cy="2" r="1.500"/><circle cx="14" cy="2" r="1.500"/></g></svg><i></i></button>
  <button class="app" aria-label="Chrome"><svg viewBox="0 0 22 22"><circle cx="11" cy="11" r="9.500" fill="#fbc116"/><path fill="#e33b2e" d="M11 11L2.800 6.200A9.500 9.500 0 0119.200 6.200z"/><path fill="#2da94f" d="M2.800 6.200L11 11l2 4-3.500 5.400A9.500 9.500 0 012.800 6.200z"/><path fill="#e33b2e" d="M10 6.200h9.200A9.500 9.500 0 002.800 6.200L7 11z"/><circle cx="11" cy="11" r="4.800" fill="#fff"/><circle cx="11" cy="11" r="3.700" fill="#4285f4"/></svg><i></i></button>
  <button class="app many" aria-label="WPS"><svg viewBox="0 0 22 22"><rect x="2" y="2" width="18" height="18" rx="2" fill="#2f7ef4"/><path d="M5 7h2l2 8 2-5 2 5 3-8h1M9 7h4l-2 3z" fill="none" stroke="#fff" stroke-width="1.300"/></svg><i></i></button>
  <button class="app front" aria-label="Device Studio"><svg><use href="#biglogo"/></svg><i></i></button>
  <button class="app many" aria-label="MATLAB"><svg viewBox="0 0 22 22"><path fill="#3d7fb5" d="M1 12l6-3 3 3-4 4z"/><path fill="#26363f" d="M7 9l6-7-1 12-5 4z"/><path fill="#e2661a" d="M13 2c3 4 4 9 8 15-3-2-5 0-8 3-1-2-3-5-4-5 2-2 3-7 4-13z"/><path fill="#a92e12" d="M13 2c-1 6-2 11-7 14l3-1 4 5z"/></svg><i></i></button>
  <button class="app" aria-label="WeChat"><svg viewBox="0 0 22 22"><ellipse cx="8" cy="8" rx="7" ry="6" fill="#6cc52d"/><path fill="#6cc52d" d="M3 11l-1 5 4-3z"/><ellipse cx="15" cy="13" rx="6" ry="5" fill="#f8f8f8"/><circle cx="6" cy="6" r="1" fill="#264"/><circle cx="10.500" cy="6" r="1" fill="#264"/><circle cx="13" cy="12" r=".8" fill="#777"/><circle cx="17" cy="12" r=".8" fill="#777"/></svg><i></i></button>
  <button class="app" aria-label="Profile"><svg viewBox="0 0 22 22"><circle cx="11" cy="11" r="10" fill="#858b94"/><path fill="#2b2530" d="M10 2h2l1 4 2 4 5 5c-3 5-11 6-16 2l4-5z"/><path stroke="#6d6873" d="M10 9l-3 7M12 9l3 7"/><circle cx="10.800" cy="4.800" r="1.300" fill="#d9b9a8"/></svg><i></i></button>
  <button class="app" aria-label="WordPad"><svg viewBox="0 0 22 22"><path fill="#cfe6f6" stroke="#5b9ac4" d="M3.500 2.500h16v17h-16z"/><path fill="#4f97c8" d="M3 2h17v3H3z"/><path d="M5.500 13L8 6l2.500 7M6.500 11h3" stroke="#d77a25" stroke-width="1.500" fill="none"/><path stroke="#6aa" d="M12 8.500h5M12 11.500h5M6 15.500h11"/></svg><i></i></button>

  <div class="ms-auto d-flex align-items-center tray">
    <div class="d-flex align-items-center gap-1">
      <svg width="10" height="20" viewBox="0 0 10 20"><path fill="#fff" stroke="#999" stroke-width=".5" d="M2 1h1.500v4h3V1H8v4h1.500v5L6 13v6H4v-6L.5 10V5H2z"/></svg>
      <span class="power">100%</span>
    </div>
    <svg width="12" height="12" viewBox="0 0 12 12"><path d="M1 8.500l5-5 5 5" fill="none" stroke="#222"/></svg>
    <svg width="14" height="16" viewBox="0 0 14 16"><ellipse cx="7" cy="9" rx="5" ry="6" fill="#111"/><circle cx="7" cy="5" r="4" fill="#111"/><ellipse cx="7" cy="10.500" rx="3" ry="3.500" fill="#fff"/><path fill="#f0259a" d="M2 7h10v2H2zM8 1l4-1v4z"/><path fill="#e8a01c" d="M3 14h3v1.500H3zM8 14h3v1.500H8zM5.500 5.500h3v1h-3z"/></svg>
    <svg width="14" height="12" viewBox="0 0 14 12"><path fill="#111" d="M4 3h9v7H4zM13 5h1v3h-1z"/><path d="M.5 1.500h3v3h-3zM2 4v4h2" fill="none" stroke="#111"/></svg>
    <svg width="12" height="12" viewBox="0 0 12 12"><path d="M1 11A10 10 0 0111 1M4 11a7 7 0 017-7M7 11a4 4 0 014-4" fill="none" stroke="#555"/><circle cx="10" cy="10.500" r="1.200" fill="#222"/></svg>
    <svg width="13" height="12" viewBox="0 0 13 12"><path d="M.5 4.500h2l3-3v9l-3-3h-2zM8 4l4 4M12 4L8 8" fill="none" stroke="#222"/></svg>
    <svg width="14" height="14" viewBox="0 0 14 14"><path d="M1.500 3.500h11v6h-11zM7 .5v13" fill="none" stroke="#888" stroke-width="2.500"/><path d="M1.500 3.500h11v6h-11zM7 .5v13" fill="none" stroke="#fff"/></svg>
    <svg class="ms-1" width="14" height="14" viewBox="0 0 14 14"><rect width="14" height="13" rx="2" fill="#f0521d"/><path d="M11 3.500C7 2 4 3 4 4.500c0 2 6 1.500 6 3.500S6 11 3 9.500" fill="none" stroke="#fff" stroke-width="2"/></svg>
    <div class="text-center clock">14:19<br>2020/8/18</div>
    <svg class="me-3" width="22" height="22" viewBox="0 0 22 22"><path fill="#111" d="M1 1h14v11H7l-3 3v-3H1z"/><path stroke="#ccc" d="M3 4.500h10M3 7.500h10"/><circle cx="14" cy="14" r="6.500" fill="#ddd" stroke="#888"/><text x="14" y="18" text-anchor="middle" font-size="11" font-weight="bold" font-family="Noto Sans" fill="#111">2</text></svg>
  </div>
</footer>
<script src="https://cdn.jsdelivr.net/npm/bootstrap@5.3.0/dist/js/bootstrap.bundle.min.js"></script>
</body>
</html>
